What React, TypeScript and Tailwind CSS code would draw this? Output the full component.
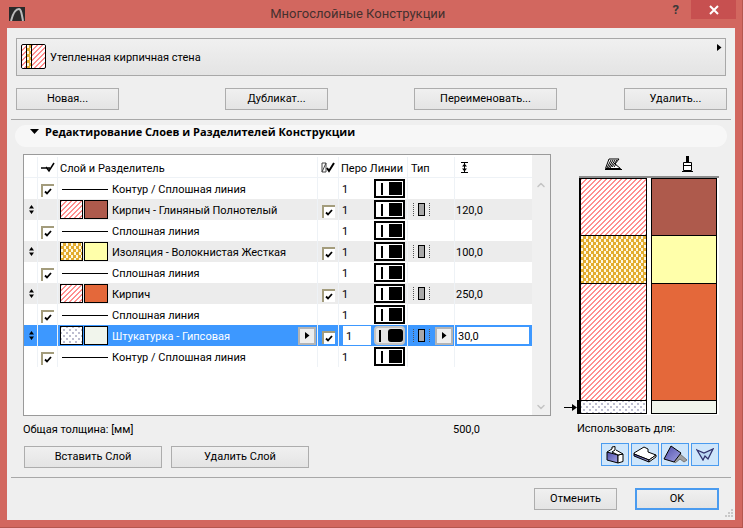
import { ReactNode } from 'react';
import { ChevronUp, ChevronDown } from 'lucide-react';

const font = 'font-["Roboto","Noto_Sans",sans-serif]';

const brickBg = 'bg-[repeating-linear-gradient(135deg,#ff8f8f_0px,#ff8f8f_1.414px,#ffffff_1.414px,#ffffff_3.5355px)]';
const insulationBg = 'bg-[conic-gradient(#e3ac30_25%,#fff8e0_0_50%,#e3ac30_0_75%,#fff8e0_0)] bg-[length:5px_6px]';
const plasterBg =
  'bg-white bg-[radial-gradient(#6f6f98_0.6px,transparent_0.8px),radial-gradient(#6f6f98_0.6px,transparent_0.8px)] bg-[length:6px_6px] bg-[position:0_0,3px_3px]';

type Layer = {
  kind: 'line' | 'layer';
  name: string;
  hatch?: string;
  color?: string;
  thick?: string;
  selected?: boolean;
};

const layers: Layer[] = [
  { kind: 'line', name: 'Контур / Сплошная линия' },
  { kind: 'layer', name: 'Кирпич - Глиняный Полнотелый', hatch: brickBg, color: 'bg-[#ae5a4c]', thick: '120,0' },
  { kind: 'line', name: 'Сплошная линия' },
  { kind: 'layer', name: 'Изоляция - Волокнистая Жесткая', hatch: insulationBg, color: 'bg-[#ffffaa]', thick: '100,0' },
  { kind: 'line', name: 'Сплошная линия' },
  { kind: 'layer', name: 'Кирпич', hatch: brickBg, color: 'bg-[#e4683a]', thick: '250,0' },
  { kind: 'line', name: 'Сплошная линия' },
  { kind: 'layer', name: 'Штукатурка - Гипсовая', hatch: plasterBg, color: 'bg-[#f1f5ec]', thick: '30,0', selected: true },
  { kind: 'line', name: 'Контур / Сплошная линия' },
];

function Btn({ children, className, primary }: { children: ReactNode; className: string; primary?: boolean }) {
  return (
    <button
      className={`h-[22px] bg-gradient-to-b from-[#f0f0f0] to-[#e4e4e4] text-[11px] text-black ${
        primary ? 'border-2 border-[#4a9bef]' : 'border border-[#adadad]'
      } ${className}`}
    >
      {children}
    </button>
  );
}

function Tri({ className = '' }: { className?: string }) {
  return (
    <svg width="5" height="7" viewBox="0 0 5 7" className={className}>
      <path d="M0 0L4.5 3.5L0 7Z" fill="#000" />
    </svg>
  );
}

function Check({ white }: { white?: boolean }) {
  return (
    <span
      className={`flex h-[13px] w-[13px] items-center justify-center border-l-2 border-t-2 border-[#a39c7c] ${
        white ? 'bg-white' : ''
      }`}
    >
      <svg width="8" height="7" viewBox="0 0 8 7">
        <path d="M1 3.5L3 5.5L7 1" fill="none" stroke="#000" strokeWidth="1.8" />
      </svg>
    </span>
  );
}

function Move() {
  return (
    <svg width="5" height="9" viewBox="0 0 5 9">
      <path d="M2.5 0L5 3.5H0ZM0 5.5H5L2.5 9Z" fill="#000" />
    </svg>
  );
}

function LineBox({ selected }: { selected?: boolean }) {
  return (
    <span
      className={`flex h-[19px] w-[31px] items-center border-2 ${
        selected ? 'rounded-sm border-[#c4c4c4] bg-[#e6e6e6] pl-[3px]' : 'border-black bg-white pl-[5px]'
      }`}
    >
      <span className="h-[12px] w-[2px] bg-black" />
      <span
        className={`h-[13px] bg-black ${selected ? 'ml-[7px] w-[15px] rounded-[3px]' : 'ml-[6px] w-[13px]'}`}
      />
    </span>
  );
}

function TypeIcon() {
  return (
    <span className="flex h-[13px] items-center gap-[4px]">
      <span className="h-[13px] border-l border-dotted border-[#555]" />
      <span className="h-[13px] w-[7px] border border-black bg-[#a8a8a8]" />
      <span className="h-[13px] border-l border-dotted border-[#555]" />
    </span>
  );
}

function MiniBtn() {
  return (
    <span className="flex h-[18px] w-[18px] items-center justify-center border-2 border-[#b4b4b4] bg-[#eeeeee]">
      <Tri />
    </span>
  );
}

function Row({ layer }: { layer: Layer }) {
  const sel = layer.selected;
  const isLayer = layer.kind === 'layer';
  const rowBg = sel ? 'bg-[#3d98ff]' : isLayer ? 'bg-[#ececec]' : 'bg-white';
  return (
    <div className={`flex h-[21px] items-center ${rowBg}`}>
      <div className="flex h-full w-[14px] items-center justify-center border-r border-[#eef2f6] pl-[1px]">
        {isLayer && <Move />}
      </div>
      <div className="flex h-full w-[20px] items-center justify-center border-r border-[#eef2f6] pr-[1px] pt-[3px]">
        {!isLayer && <Check />}
      </div>
      <div className="flex h-full w-[260px] items-center border-r border-[#eef2f6] pl-[2px]">
        {isLayer ? (
          <>
            <span className={`h-[19px] w-[23px] border border-black ${layer.hatch}`} />
            <span className={`ml-[1px] h-[19px] w-[24px] border border-black ${layer.color}`} />
          </>
        ) : (
          <span className="ml-[2px] mt-[1px] h-[1px] w-[46px] bg-black" />
        )}
        <span className={`ml-[4px] whitespace-nowrap pt-[4px] ${sel ? 'text-white' : 'text-black'}`}>{layer.name}</span>
        {sel && (
          <span className="ml-auto mr-[1px]">
            <MiniBtn />
          </span>
        )}
      </div>
      <div className="flex h-full w-[21px] items-center justify-center border-r border-[#eef2f6] pt-[3px]">
        {isLayer && <Check white />}
      </div>
      <div className="flex h-full w-[35px] items-center pl-[3px]">
        {sel ? (
          <span className="ml-[1px] flex h-[19px] w-[28px] items-center bg-white pl-[3px] pt-[4px] text-black">1</span>
        ) : (
          <span className="pt-[4px]">1</span>
        )}
      </div>
      <div className="flex h-full w-[34px] items-center border-r border-[#eef2f6]">
        <LineBox selected={sel} />
      </div>
      <div className="flex h-full w-[47px] items-center border-r border-[#eef2f6] pl-[5px]">
        {isLayer && <TypeIcon />}
        {sel && (
          <span className="ml-auto mr-[1px]">
            <MiniBtn />
          </span>
        )}
      </div>
      <div className={`flex h-full w-[76px] items-center pl-[1px] pt-[4px] ${sel ? 'border-2 border-[#3d98ff] bg-white' : ''}`}>
        {layer.thick}
      </div>
    </div>
  );
}

function LayerTable() {
  return (
    <div className="flex h-[262px] w-[528px] border border-[#9a9a9a] bg-white">
      <div className="flex-1">
        <div className="mt-[2px] flex h-[21px] items-center border-b border-[#eef2f6] text-black">
          <div className="h-full w-[14px] border-r border-[#eef2f6]" />
          <div className="flex h-full w-[20px] items-center justify-center border-r border-[#eef2f6]">
            <svg width="14" height="11" viewBox="0 0 14 11">
              <path d="M0 6H9M5 5L8 9L13 1" fill="none" stroke="#000" strokeWidth="1.5" />
            </svg>
          </div>
          <div className="flex h-full w-[260px] items-center border-r border-[#eef2f6] pl-[2px] pt-[4px]">Слой и Разделитель</div>
          <div className="flex h-full w-[21px] items-center justify-center border-r border-[#eef2f6]">
            <svg width="15" height="11" viewBox="0 0 15 11">
              <path d="M1 1H5V10H1ZM1 10L5 1" fill="none" stroke="#444" strokeWidth="1" />
              <path d="M6 6L8 9L13 1" fill="none" stroke="#000" strokeWidth="2" />
            </svg>
          </div>
          <div className="flex h-full w-[69px] items-center whitespace-nowrap border-r border-[#eef2f6] pl-[2px] pt-[4px]">
            Перо Линии
          </div>
          <div className="flex h-full w-[47px] items-center border-r border-[#eef2f6] pl-[3px] pt-[4px]">Тип</div>
          <div className="flex h-full w-[76px] items-center pl-[5px]">
            <svg width="9" height="11" viewBox="0 0 9 11">
              <path d="M1 .5H8M1 10.5H8M4.5 1V10" stroke="#000" fill="none" />
              <path d="M4.5 1.5L7 4.5H2ZM2 6.5H7L4.5 9.5Z" fill="#000" />
            </svg>
          </div>
        </div>
        {layers.map((l, i) => (
          <Row key={i} layer={l} />
        ))}
      </div>
      <div className="flex w-[18px] flex-col items-center justify-between bg-[#f0f0f0] pb-[2px] pt-[24px] text-[#c4c4c4]">
        <ChevronUp size={12} strokeWidth={3} />
        <ChevronDown size={12} strokeWidth={3} />
      </div>
    </div>
  );
}

function Preview() {
  return (
    <div className="flex flex-col">
      <div className="flex h-[22px] items-start pl-[41px] pt-[4px]">
        <svg width="17" height="12" viewBox="0 0 17 12">
          <path d="M.5 10.5L4 1H14L10 6L15.5 10.5Z" fill="#fff" stroke="#000" />
          <path d="M2 10L6 2M3.5 10L8 2M5 10L10 2M7 9L12 2M9 9L11 6" stroke="#000" fill="none" />
          <path d="M0 11H17V12H0Z" fill="#000" />
        </svg>
        <svg width="11" height="16" viewBox="0 0 11 16" className="-mt-[2px] ml-[60px]">
          <path d="M4 0H7V6H4Z" fill="#000" />
          <path d="M1.5 6.5H9.5V14.5H1.5Z" fill="#fff" stroke="#000" />
          <path d="M1 9H10V10H1ZM0 15H11V16H0Z" fill="#000" />
        </svg>
      </div>
      <div className="flex">
        <div className="flex h-[239px] w-[15px] items-end pb-[1px]">
          <span className="flex h-[14px] items-center">
            <span className="h-[1px] w-[9px] bg-black" />
            <svg width="5" height="7" viewBox="0 0 5 7" className="-ml-[1px]">
              <path d="M0 0L5 3.5L0 7Z" fill="#000" />
            </svg>
            <span className="h-[14px] w-[2px] bg-black" />
          </span>
        </div>
        <div className="flex h-[239px] w-[140px] gap-[4px] border-t-2 border-t-[#8c8c8c] bg-white pb-[1px] pr-[2px]">
          <div className="flex w-[68px] flex-col border-b border-l-2 border-r border-black">
            <div className={`h-[57px] border-t border-black ${brickBg}`} />
            <div className={`h-[48px] border-t border-black ${insulationBg}`} />
            <div className={`h-[117px] border-t border-black ${brickBg}`} />
            <div className={`flex-1 border-t border-black ${plasterBg}`} />
          </div>
          <div className="flex w-[66px] flex-col border-x border-b border-black">
            <div className="h-[57px] border-t border-black bg-[#ae5a4c]" />
            <div className="h-[48px] border-t border-black bg-[#ffffaa]" />
            <div className="h-[117px] border-t border-black bg-[#e4683a]" />
            <div className="flex-1 border-t border-black bg-[#f1f5ec]" />
          </div>
        </div>
      </div>
    </div>
  );
}

function UseButtons() {
  const cls = 'flex h-[23px] w-[28px] items-center justify-center border border-[#4a9bef] bg-[#cfe6fb]';
  return (
    <div className="flex justify-end gap-[2px]">
      <svg width="0" height="0" className="absolute">
        <defs>
          <linearGradient id="faceBlue" x1="0" y1="0" x2="1" y2="1">
            <stop offset="0" stopColor="#4c4ca8" />
            <stop offset="1" stopColor="#a4a4e4" />
          </linearGradient>
        </defs>
      </svg>
      <span className={cls}>
        <svg width="18" height="18" viewBox="0 0 18 18">
          <path d="M1 6L12 9V17L1 14Z" fill="url(#faceBlue)" stroke="#000" />
          <path d="M12 9L17 8V15.5L12 17Z" fill="#fff" stroke="#000" />
          <path d="M1 6L6 3V1L9 .5V4L6 6L12 9L17 8L10 4" fill="#fff" stroke="#000" />
        </svg>
      </span>
      <span className={cls}>
        <svg width="24" height="17" viewBox="0 0 24 17">
          <path d="M1 7L11 1L15 3V6L23 9L16 14L1 8Z" fill="#fff" stroke="#000" />
          <path d="M1 8L16 14V16L1 10Z" fill="url(#faceBlue)" stroke="#000" />
          <path d="M16 14L23 9V11L16 16Z" fill="#fff" stroke="#000" />
        </svg>
      </span>
      <span className={cls}>
        <svg width="25" height="19" viewBox="0 0 25 19">
          <path d="M17 9L24 15L21 17L17 14L12 18L10 15Z" fill="#a0a0a0" stroke="#777" />
          <path d="M1 14L8 1L18 8L11 17Z" fill="url(#faceBlue)" stroke="#000" />
        </svg>
      </span>
      <span className={cls}>
        <svg width="18" height="13" viewBox="0 0 18 13">
          <path d="M1 2L8 5L17 1L12 11L9 8L7 12Z" fill="#bcd7f3" stroke="#30306c" strokeWidth="1.3" />
        </svg>
      </span>
    </div>
  );
}

export default function App() {
  return (
    <div
      className={`flex h-[528px] w-[743px] flex-col overflow-hidden border-b border-r border-[#b5554e] bg-[#d2675f] text-[11px] text-black ${font}`}
    >
      <div className="flex h-[28px] shrink-0 items-center pl-[9px] pr-[6px]">
        <svg width="16" height="14" viewBox="0 0 16 14">
          <rect width="16" height="14" fill="#2a2a2a" />
          <path d="M2 14C4 6 7 2 10 2C12 2 13 8 14 14" fill="none" stroke="#bbb" strokeWidth="2" />
        </svg>
        <div className="flex-1 pl-[18px] text-center text-[13px] text-[#45302e]">Многослойные Конструкции</div>
        <div className="flex h-[19px] items-center self-start">
          <span className="mr-[12px] text-[13px] font-bold text-[#3a3a3a]">?</span>
          <span className="flex h-[19px] w-[45px] items-center justify-center bg-[#c75050]">
            <svg width="10" height="10" viewBox="0 0 10 10">
              <path d="M1 1L9 9M9 1L1 9" stroke="#fff" strokeWidth="2" />
            </svg>
          </span>
        </div>
      </div>
      <div className="flex min-h-0 flex-1 pb-[7px] pl-[7px] pr-[7px]">
        <div className="relative flex w-[728px] flex-col bg-[#efefef] px-[4px]">
          <div className="mx-[5px] mt-[10px] flex h-[38px] w-[710px] border border-[#a8a8a8] bg-gradient-to-b from-[#f0f0f0] to-[#e4e4e4] pl-[4px]">
            <span className="mt-[5px] flex h-[25px] w-[25px] overflow-hidden rounded-[2px] border border-black">
              <span className={`w-[5px] border-r border-black ${brickBg}`} />
              <span className={`w-[5px] border-r border-black ${insulationBg}`} />
              <span className={`flex-1 ${brickBg}`} />
            </span>
            <span className="ml-[4px] flex-1 self-center pt-[2px] text-black">Утепленная кирпичная стена</span>
            <Tri className="mr-[3px] mt-[5px]" />
          </div>
          <div className="mx-[5px] mt-[12px] flex w-[711px]">
            <Btn className="w-[103px]">Новая...</Btn>
            <Btn className="ml-[106px] w-[103px]">Дубликат...</Btn>
            <Btn className="ml-[86px] w-[143px]">Переименовать...</Btn>
            <Btn className="ml-[67px] w-[103px]">Удалить...</Btn>
          </div>
          <div className="mt-[9px] h-[1px] bg-[#a8a8a8]" />
          <div className="ml-[4px] mt-[5px] flex h-[22px] w-[712px] items-start rounded-full bg-[#f7f7f7] pl-[15px] font-['Open_Sans'] font-bold leading-[14px]">
            <svg width="9" height="5" viewBox="0 0 9 5" className="mt-[4px]">
              <path d="M0 0H9L4.5 5Z" fill="#000" />
            </svg>
            <span className="ml-[6px]">Редактирование Слоев и Разделителей Конструкции</span>
          </div>
          <div className="ml-[12px] mt-[7px] flex">
            <div className="flex flex-col">
              <LayerTable />
              <div className="mt-[5px] flex h-[16px] items-center pt-[2px]">
                <span className="w-[430px]">Общая толщина: [мм]</span>
                <span>500,0</span>
              </div>
              <div className="ml-[1px] mt-[9px] flex gap-[9px]">
                <Btn className="w-[138px]">Вставить Слой</Btn>
                <Btn className="w-[138px]">Удалить Слой</Btn>
              </div>
            </div>
            <div className="ml-[13px] flex w-[155px] flex-col">
              <Preview />
              <div className="ml-[13px] mt-[6px] h-[16px]">Использовать для:</div>
              <div className="mt-[6px]">
                <UseButtons />
              </div>
            </div>
          </div>
          <div className="mt-[9px] h-[1px] bg-[#a8a8a8]" />
          <div className="mt-[10px] flex justify-end pr-[12px]">
            <Btn className="w-[83px]">Отменить</Btn>
            <Btn primary className="ml-[18px] w-[84px]">
              OK
            </Btn>
          </div>
          <svg width="9" height="9" viewBox="0 0 9 9" className="absolute bottom-[2px] right-[1px]">
            <path d="M6 0H8V2H6ZM3 3H5V5H3ZM6 3H8V5H6ZM0 6H2V8H0ZM3 6H5V8H3ZM6 6H8V8H6Z" fill="#c8c8c8" />
          </svg>
        </div>
      </div>
    </div>
  );
}
